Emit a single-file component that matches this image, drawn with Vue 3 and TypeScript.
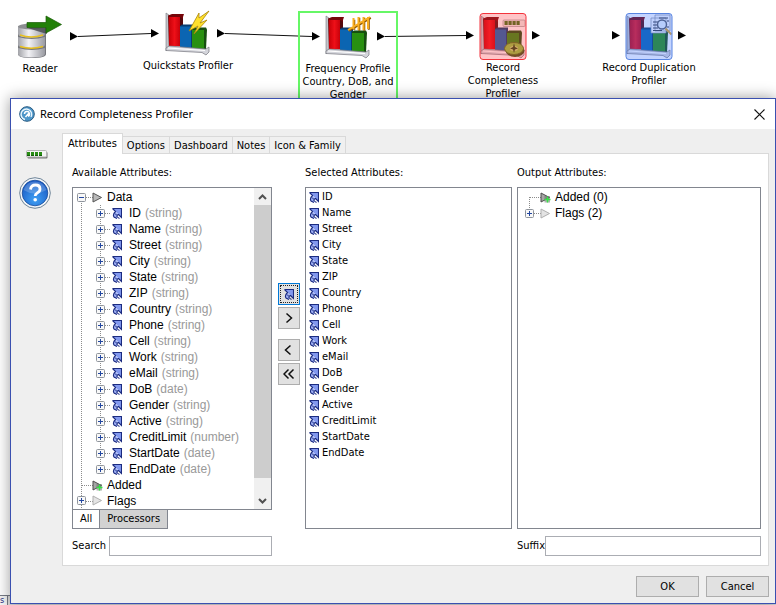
<script setup lang="ts">
import { ref } from 'vue'

interface CanvasNode {
  id: string
  lines: string[]
  x: number
  y: number
  labelTop: number
  kind: 'reader' | 'quick' | 'frequency' | 'complete' | 'duplicate'
}

const nodes: CanvasNode[] = [
  { id: 'n1', lines: ['Reader'], x: 40, y: 12, labelTop: 50, kind: 'reader' },
  { id: 'n2', lines: ['Quickstats Profiler'], x: 188, y: 10, labelTop: 49, kind: 'quick' },
  { id: 'n3', lines: ['Frequency Profile', 'Country, DoB, and', 'Gender'], x: 348, y: 13, labelTop: 49, kind: 'frequency' },
  { id: 'n4', lines: ['Record', 'Completeness', 'Profiler'], x: 503, y: 13, labelTop: 48, kind: 'complete' },
  { id: 'n5', lines: ['Record Duplication', 'Profiler'], x: 649, y: 13, labelTop: 48, kind: 'duplicate' },
]

const ports: [number, number][] = [
  [70, 36], [151, 33], [217, 33], [312, 36], [377, 36], [466, 35], [532, 35], [612, 35], [678, 35],
]

const attributes = [
  { name: 'ID', type: 'string' },
  { name: 'Name', type: 'string' },
  { name: 'Street', type: 'string' },
  { name: 'City', type: 'string' },
  { name: 'State', type: 'string' },
  { name: 'ZIP', type: 'string' },
  { name: 'Country', type: 'string' },
  { name: 'Phone', type: 'string' },
  { name: 'Cell', type: 'string' },
  { name: 'Work', type: 'string' },
  { name: 'eMail', type: 'string' },
  { name: 'DoB', type: 'date' },
  { name: 'Gender', type: 'string' },
  { name: 'Active', type: 'string' },
  { name: 'CreditLimit', type: 'number' },
  { name: 'StartDate', type: 'date' },
  { name: 'EndDate', type: 'date' },
]

const tabs = ['Attributes', 'Options', 'Dashboard', 'Notes', 'Icon & Family']
const activeTab = ref('Attributes')
const search = ref('')
const suffix = ref('')
</script>

<template>
  <div class="desktop">
    <svg class="defs" width="0" height="0" aria-hidden="true">
      <defs>
        <linearGradient id="metal" x1="0" x2="1" y1="0" y2="0">
          <stop offset="0" stop-color="#a2a3a8" />
          <stop offset=".4" stop-color="#f2f2f5" />
          <stop offset="1" stop-color="#9a9ba2" />
        </linearGradient>
        <linearGradient id="redbar" x1="0" x2="1" y1="0" y2="0">
          <stop offset="0" stop-color="#c80008" />
          <stop offset=".5" stop-color="#ee1018" />
          <stop offset="1" stop-color="#c8000a" />
        </linearGradient>
        <radialGradient id="help" cx=".5" cy=".75" r=".8">
          <stop offset="0" stop-color="#3fa0f4" />
          <stop offset="1" stop-color="#1350bd" />
        </radialGradient>
        <symbol id="chart" viewBox="0 0 46 46">
          <path d="M1 3l3 2v32l-3 4z" fill="#c4c5cb" stroke="#77787f" stroke-width=".6" />
          <path d="M3 5.500l4-1.500h12l-1 3v29H4z" fill="#750509" />
          <path d="M15 7l3 2v28h-3z" fill="#53090c" />
          <path d="M4 7h11v29.500L4 36z" fill="url(#redbar)" />
          <path d="M15 16l2-1.500h11V38H15z" fill="#083d70" />
          <path d="M15 16.500h11V38H15z" fill="#0b65b2" />
          <path d="M27 19l2-1.500h12l1 2-1 20H27z" fill="#164e10" />
          <path d="M27 20h12v18.500H27z" fill="#289010" />
          <path d="M1 38l3-2 37 3 3-2v5l-3 3-4-2.500-36-2z" fill="#d4d5db" stroke="#75767e" stroke-width=".7" />
          <path d="M3 38l37 2.500" stroke="#fff" stroke-width="1.200" />
        </symbol>
        <symbol id="attr" viewBox="0 0 10 11">
          <path d="M1 1h8v8L6.500 6.500 3.500 3.500z" fill="#8298ee" />
          <path d="M3 3.500L6.500 7 5 8l.5 2H3L1 7.500z" fill="#9cadf2" />
          <path d="M.5.5h9V9.500L6.500 6.500M.5.5L3.500 3.500Q.3 6.500 2 9l3 1.500M6.500 6.500Q4.300 7.500 5 8.500T7.500 10.500" fill="none" stroke="#1b2b80" stroke-width="1.100" />
          <path d="M3 5.500L4.500 7" stroke="#1b2b80" />
        </symbol>
        <symbol id="plus" viewBox="0 0 9 9">
          <rect x=".5" y=".5" width="8" height="8" rx="1" fill="#f8f8f8" stroke="#8f959c" />
          <path d="M2 4.500h5M4.500 2v5" stroke="#2347a0" />
        </symbol>
        <symbol id="minus" viewBox="0 0 9 9">
          <rect x=".5" y=".5" width="8" height="8" rx="1" fill="#f8f8f8" stroke="#8f959c" />
          <path d="M2 4.500h5" stroke="#2347a0" />
        </symbol>
        <symbol id="tri" viewBox="0 0 11 11">
          <path d="M1 1l8.500 4.500L1 10z" fill="#b9b9b9" stroke="#555" />
        </symbol>
        <symbol id="tripale" viewBox="0 0 11 11">
          <path d="M1 1l8.500 4.500L1 10z" fill="#e4e4e4" stroke="#b0b0b0" />
        </symbol>
        <symbol id="triadd" viewBox="0 0 11 11">
          <path d="M1 1l8.500 4.500L1 10z" fill="#a5a5a5" stroke="#4c4c4c" />
          <path d="M4.500 4h5.500v6.500H4.500z" fill="#666" opacity=".5" />
          <path d="M7.500 4.500V10.500M4.500 7.500h6" stroke="#35e445" stroke-width="1.400" />
        </symbol>
      </defs>
    </svg>

    <main class="canvas" aria-label="Process canvas">
      <svg class="edges" width="776" height="98" aria-hidden="true">
        <path d="M78 36.500L151 33.500M225 33.500L312 36.500M385 36.500L466 35.500" stroke="#111" fill="none" />
        <path v-for="p in ports" :key="p[0]" :d="`M${p[0]} ${p[1] - 4}l8 4.500l-8 4z`" fill="#000" />
      </svg>
      <div
        v-for="n in nodes"
        :key="n.id"
        class="node"
        :class="n.kind"
        :style="{ left: n.x + 'px', top: n.y + 'px' }"
      >
        <svg class="node-icon" width="48" height="48" viewBox="0 0 48 48" aria-hidden="true">
          <template v-if="n.kind === 'reader'">
            <g transform="translate(1 0)">
              <path d="M1 15v27q0 4 14 4t14-4V15z" fill="#77787d" />
              <path d="M1 14v8q0 3.500 13.500 3.500T28 22v-8z" fill="url(#metal)" />
              <path d="M3 23q11 4 23 0" stroke="#e8c01c" stroke-width="1.500" fill="none" />
              <path d="M1 25v8q0 3 13.500 3T28 33v-8q-13 4-27 0z" fill="url(#metal)" />
              <path d="M3 34.500q11 3.500 23 0" stroke="#e8c01c" stroke-width="1.500" fill="none" />
              <path d="M1 36v6q0 3.500 13.500 3.500T28 42v-6q-13 4-27 0z" fill="url(#metal)" />
              <ellipse cx="14.500" cy="14.500" rx="13.500" ry="3" fill="#8d8e92" />
              <path d="M11 16h19v6L20 19z" fill="#3e3f44" opacity=".75" />
              <path d="M10 10.500h19V4l15.500 8.500L29 21v-5.500H10z" fill="#228008" stroke="#175a04" stroke-width=".7" />
            </g>
          </template>
          <template v-else>
            <use href="#chart" x="1" y="0" width="46" height="46" />
            <path v-if="n.kind === 'quick'" d="M35 3L25 21l9-5-4 8 13-14-7 3 9-12-10 7z" fill="#ffe02c" stroke="#a88408" stroke-width=".8" />
            <g v-if="n.kind === 'frequency'" stroke-width="2" fill="none">
              <path d="M29.500 6v10M34.500 4v13M39.500 4v13M44 4v12M24 17L46 4" stroke="#8f5604" transform="translate(.8 .8)" />
              <path d="M29.500 5v11M34.500 4v13M39.500 4v13M44 4v12M24 17L46 4" stroke="#f8ad1f" />
            </g>
            <g v-if="n.kind === 'complete'">
              <rect x="24" y="7" width="22" height="6.500" rx="1" fill="#f0eeea" stroke="#999" stroke-width=".7" />
              <path d="M25.500 10h16" stroke="#397516" stroke-width="4" stroke-dasharray="3.200 .8" />
              <ellipse cx="36" cy="37.500" rx="9.500" ry="6.500" fill="#355517" />
              <ellipse cx="35" cy="35.500" rx="9.500" ry="6" fill="#8cc840" stroke="#4a741c" />
              <ellipse cx="35" cy="35.500" rx="4" ry="2.500" fill="#c3dc7c" />
              <path d="M35 30l1 4 3 1.500-3 1-1 3.500-1-3.500-3-1 3-1.500z" fill="#234812" />
            </g>
            <g v-if="n.kind === 'duplicate'">
              <path d="M30 2h15v16H30zM26 5h15v15H26z" fill="#f8fafc" stroke="#8890a0" stroke-width=".7" />
              <path d="M28 9h5M28 12h4M28 15h5M28 17.500h9M34 5h9M42 8h2M42 14h2" stroke="#343945" />
              <circle cx="37" cy="11.500" r="4.500" fill="#edf5fa" stroke="#565d68" stroke-width="1.500" />
              <path d="M40.500 15.500l6 6" stroke="#e0a62c" stroke-width="2" />
            </g>
          </template>
          <rect v-if="n.kind === 'complete'" x="1" y=".5" width="46" height="46" rx="3" fill="#ff3c46" fill-opacity=".3" stroke="#f3333c" />
          <rect v-if="n.kind === 'duplicate'" x="1" y=".5" width="46" height="46" rx="3" fill="#3d70ff" fill-opacity=".3" stroke="#5884e0" />
        </svg>
        <div class="node-label" :style="{ top: n.labelTop + 'px' }">
          <div v-for="l in n.lines" :key="l">{{ l }}</div>
        </div>
      </div>
      <div class="under-tabs"><span class="under-tab">s</span></div>
    </main>

    <section class="dialog" role="dialog" aria-labelledby="dialog-title">
      <header class="titlebar">
        <svg width="16" height="16" viewBox="0 0 16 16" aria-hidden="true">
          <circle cx="8" cy="8" r="7.300" fill="#4d96c9" stroke="#285a80" />
          <path d="M6 13.500A5.300 5.300 0 1 1 12 11" fill="none" stroke="#e8f5fd" stroke-width="1.400" />
          <path d="M6.500 11l4-4.500M5.500 8a2.500 2.500 0 1 1 3.500 2.300" fill="none" stroke="#fff" stroke-width="1.500" />
        </svg>
        <h1 id="dialog-title">Record Completeness Profiler</h1>
        <button class="close" type="button" aria-label="Close">
          <svg width="11" height="11" viewBox="0 0 11 11"><path d="M.5.5l10 10M10.500.5l-10 10" stroke="#111" stroke-width="1.100" /></svg>
        </button>
      </header>

      <div class="body">
        <aside class="side">
          <svg class="gauge" width="22" height="9" viewBox="0 0 22 9" aria-hidden="true">
            <rect x="1.500" y="2" width="20" height="6.500" rx="1" fill="#777" />
            <rect x=".5" y=".5" width="20" height="6.500" rx="1" fill="#f4f4f4" stroke="#b4b4b4" />
            <path d="M1 4h16" stroke="#278c12" stroke-width="4" stroke-dasharray="3 1" />
            <path d="M1 5.500h16" stroke="#105c08" stroke-dasharray="3 1" />
          </svg>
          <button class="help" type="button" aria-label="Help">
            <svg width="32" height="32" viewBox="0 0 32 32">
              <circle cx="16" cy="16" r="15.300" fill="#f2f5f8" stroke="#6e8498" />
              <circle cx="16" cy="16" r="12.800" fill="url(#help)" stroke="#174c9c" stroke-width=".8" />
              <path d="M4.500 13a12 12 0 0 1 23 0q-12 7-23 0z" fill="#fff" opacity=".2" />
              <path d="M11.500 12.500q.5-4.500 5-4.500t4.500 4q0 2.500-2.500 3.800-2.300 1.200-2.300 3.200" fill="none" stroke="#fff" stroke-width="2.800" />
              <circle cx="16.200" cy="22.800" r="1.800" fill="#fff" />
            </svg>
          </button>
        </aside>

        <div class="content">
          <div class="tabs" role="tablist">
            <button
              v-for="t in tabs"
              :key="t"
              type="button"
              role="tab"
              class="tab"
              :class="{ active: t === activeTab }"
              :aria-selected="t === activeTab"
              @click="activeTab = t"
            >{{ t }}</button>
          </div>

          <div class="panel" role="tabpanel">
            <section class="column">
              <h2>Available Attributes:</h2>
              <div class="box available">
                <div class="tree">
                  <div class="row">
                    <svg width="34" height="16" aria-hidden="true">
                      <path class="dots" d="M8.500 8V16M13 8.500h7" />
                      <use href="#minus" x="4" y="4" width="9" height="9" />
                      <use href="#tri" x="19" y="3" width="11" height="11" />
                    </svg>Data
                  </div>
                  <div v-for="(a, i) in attributes" :key="a.name" class="row">
                    <svg width="56" height="16" aria-hidden="true">
                      <path class="dots" d="M8.500 0V16M32 8.500h6" />
                      <path class="dots" :d="i === attributes.length - 1 ? 'M27.500 0V8' : 'M27.500 0V16'" />
                      <use href="#plus" x="23" y="4" width="9" height="9" />
                      <use href="#attr" x="39" y="3" width="10" height="11" />
                    </svg>{{ a.name }}<span class="type">({{ a.type }})</span>
                  </div>
                  <div class="row">
                    <svg width="34" height="16" aria-hidden="true">
                      <path class="dots" d="M8.500 0V16M9 8.500h11" />
                      <use href="#triadd" x="19" y="3" width="11" height="11" />
                    </svg>Added
                  </div>
                  <div class="row">
                    <svg width="34" height="16" aria-hidden="true">
                      <path class="dots" d="M8.500 0V16M13 8.500h7" />
                      <use href="#plus" x="4" y="3" width="9" height="9" />
                      <use href="#tripale" x="19" y="2" width="11" height="11" />
                    </svg>Flags
                  </div>
                </div>
                <div class="scrollbar">
                  <button type="button" aria-label="Scroll up">
                    <svg width="9" height="6"><path d="M1 5l3.500-3.500L8 5" fill="none" stroke="#505050" stroke-width="2" /></svg>
                  </button>
                  <div class="track"><div class="thumb"></div></div>
                  <button type="button" aria-label="Scroll down">
                    <svg width="9" height="6"><path d="M1 1l3.500 3.500L8 1" fill="none" stroke="#505050" stroke-width="2" /></svg>
                  </button>
                </div>
              </div>
              <div class="subtabs">
                <button type="button" class="subtab chosen">All</button>
                <button type="button" class="subtab">Processors</button>
              </div>
            </section>

            <div class="movers">
              <button type="button" class="mover focused" aria-label="Add attribute">
                <svg width="10" height="11"><use href="#attr" width="10" height="11" /></svg>
              </button>
              <button type="button" class="mover" aria-label="Add">
                <svg width="12" height="12"><path d="M3.500 1.500L8.500 6l-5 4.500" /></svg>
              </button>
              <button type="button" class="mover apart" aria-label="Remove">
                <svg width="12" height="12"><path d="M7.500 1.500L2.500 6l5 4.500" /></svg>
              </button>
              <button type="button" class="mover" aria-label="Remove all">
                <svg width="12" height="12"><path d="M5.500 1.500L1 6l4.500 4.500M10.500 1.500L6 6l4.500 4.500" /></svg>
              </button>
            </div>

            <section class="column">
              <h2>Selected Attributes:</h2>
              <ul class="box selected">
                <li v-for="a in attributes" :key="a.name">
                  <svg width="10" height="11" aria-hidden="true"><use href="#attr" width="10" height="11" /></svg>{{ a.name }}
                </li>
              </ul>
            </section>

            <section class="column">
              <h2>Output Attributes:</h2>
              <div class="box output">
                <div class="tree">
                  <div class="row">
                    <svg width="34" height="16" aria-hidden="true">
                      <path class="dots" d="M8.500 8V16M9 8.500h11" />
                      <use href="#triadd" x="19" y="3" width="11" height="11" />
                    </svg>Added (0)
                  </div>
                  <div class="row">
                    <svg width="34" height="16" aria-hidden="true">
                      <path class="dots" d="M8.500 0V4M13 8.500h7" />
                      <use href="#plus" x="4" y="4" width="9" height="9" />
                      <use href="#tripale" x="19" y="3" width="11" height="11" />
                    </svg>Flags (2)
                  </div>
                </div>
              </div>
            </section>

            <div class="field search">
              <label for="search">Search</label>
              <input id="search" v-model="search" type="text" />
            </div>
            <div class="field suffix">
              <label for="suffix">Suffix</label>
              <input id="suffix" v-model="suffix" type="text" />
            </div>
          </div>

          <footer class="actions">
            <button type="button">OK</button>
            <button type="button">Cancel</button>
          </footer>
        </div>
      </div>
    </section>
  </div>
</template>

<style>
body {
  overflow: hidden;
  background: #fff;
}
</style>

<style scoped>
.desktop {
  position: relative;
  height: 100vh;
  overflow: hidden;
  font: 11px/16px "DejaVu Sans Condensed", "DejaVu Sans", sans-serif;
  color: #000;
}
.defs { position: absolute; }
button, input {
  box-sizing: border-box;
  margin: 0;
  padding: 0;
  border: 0;
  border-radius: 0;
  font: inherit;
  color: inherit;
}
svg { display: block; flex: none; }
h1, h2 { margin: 0; font: inherit; }

.canvas { position: absolute; inset: 0; }
.edges { position: absolute; left: 0; top: 0; }
.node { position: absolute; width: 0; }
.node-icon { position: absolute; left: -24px; top: 0; }
.node-label {
  position: absolute;
  left: -60px;
  width: 120px;
  line-height: 13px;
  text-align: center;
}
.node.frequency::before {
  content: "";
  position: absolute;
  left: -50px;
  top: -2px;
  box-sizing: border-box;
  width: 100px;
  height: 100px;
  border: 2px solid #66f766;
}
.under-tabs {
  position: absolute;
  left: 0;
  right: 0;
  bottom: 0;
  height: 9px;
  border-top: 1px solid #777b85;
  background: #ddd;
}
.under-tab {
  display: block;
  width: 7px;
  height: 9px;
  border-right: 1px solid #777b85;
  background: #f4f4f4;
  font-size: 9px;
  line-height: 8px;
  color: #1d2c80;
}

.dialog {
  position: absolute;
  inset: 98px 0 1px 10px;
  display: flex;
  flex-direction: column;
  border: 1px solid #3a50b0;
  background: #efefef;
  box-shadow: 0 0 14px rgba(0, 0, 0, .4);
}
.titlebar {
  display: flex;
  align-items: center;
  height: 30px;
  padding: 0 10px 0 8px;
  background: #fff;
}
.titlebar h1 {
  flex: 1;
  margin-left: 5px;
  font: 11px/16px "Noto Sans", sans-serif;
}
.close { background: transparent; }
.body { flex: 1; display: flex; min-height: 0; }
.side {
  box-sizing: border-box;
  display: flex;
  flex-direction: column;
  align-items: flex-start;
  gap: 18px;
  width: 51px;
  padding: 21px 0 0 8px;
}
.gauge { margin-left: 7px; }
.help { background: transparent; }
.content {
  flex: 1;
  display: flex;
  flex-direction: column;
  min-width: 0;
  padding-right: 6px;
}
.tabs {
  display: flex;
  align-items: flex-end;
  height: 24px;
}
.tab {
  height: 17px;
  padding: 1px 4px 0;
  border: 1px solid #d9d9d9;
  border-width: 1px 1px 0 0;
  background: #f0f0f0;
}
.tab.active {
  position: relative;
  height: 21px;
  margin-bottom: -1px;
  padding: 0 5px;
  border-left-width: 1px;
  background: #fff;
}
.panel {
  flex: 1;
  display: grid;
  grid-template-columns: 200fr 23px 207fr 244fr;
  grid-template-rows: minmax(0, 1fr) 20px;
  gap: 7px 5px;
  min-height: 0;
  padding: 11px 7px 9px 9px;
  border: 1px solid #d9d9d9;
  background: #fff;
}
.column { display: flex; flex-direction: column; min-width: 0; }
.column h2 { margin-bottom: 6px; }
.box {
  flex: 1;
  min-height: 0;
  margin: 0;
  overflow: hidden;
  border: 1px solid #82868f;
  background: #fff;
}
.available { display: flex; }
.tree {
  flex: 1;
  padding-top: 1px;
  font: 12px/16px "Liberation Sans", Arial, sans-serif;
}
.row { display: flex; height: 16px; white-space: nowrap; }
.type { margin-left: 4px; color: #999; }
.dots {
  fill: none;
  stroke: #8c8c8c;
  stroke-dasharray: 1 1;
  shape-rendering: crispEdges;
}
.output { padding-left: 3px; }
.scrollbar { display: flex; flex-direction: column; width: 17px; background: #f0f0f0; }
.scrollbar button {
  display: grid;
  place-items: center;
  height: 17px;
  background: #f0f0f0;
}
.track { flex: 1; }
.thumb { height: 95%; background: #cdcdcd; }
.subtabs { display: flex; height: 19px; }
.subtab {
  padding: 0 7px;
  border: 1px solid #82868f;
  border-width: 0 1px 1px 0;
  background: #d2d2d2;
}
.subtab.chosen { border-left-width: 1px; background: #fff; }
.movers {
  display: flex;
  flex-direction: column;
  align-items: flex-end;
  gap: 2px;
  padding-top: 118px;
}
.mover {
  display: grid;
  place-items: center;
  width: 22px;
  height: 22px;
  border: 1px solid #adadad;
  background: #e1e1e1;
}
.mover path { fill: none; stroke: #111; stroke-width: 1.5; }
.mover.focused {
  border: 1px solid #0078d7;
  outline: 1px dotted #222;
  outline-offset: -3px;
}
.mover.apart { margin-top: 8px; }
.selected { padding: 1px 0 0 3px; list-style: none; }
.selected li { display: flex; align-items: center; gap: 3px; height: 16px; }
.field { display: flex; align-items: center; }
.field input {
  flex: 1;
  min-width: 0;
  height: 20px;
  padding: 0 3px;
  border: 1px solid #abadb3;
  background: #fff;
}
.search { grid-column: 1; gap: 3px; }
.suffix { grid-column: 4; }
.actions {
  display: flex;
  justify-content: flex-end;
  gap: 7px;
  padding: 10px 0 6px;
}
.actions button {
  width: 63px;
  height: 21px;
  border: 1px solid #adadad;
  background: #e1e1e1;
}
</style>
